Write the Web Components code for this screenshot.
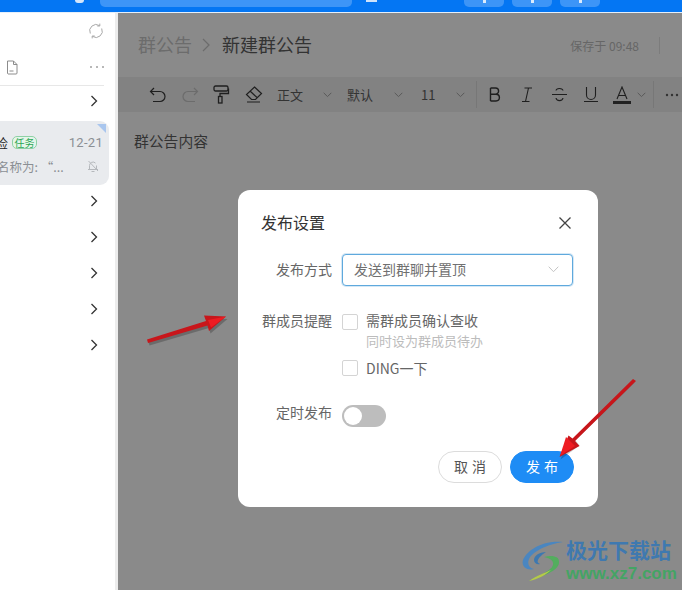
<!DOCTYPE html>
<html lang="zh">
<head>
<meta charset="utf-8">
<title>发布设置</title>
<style>
  html, body { margin: 0; height: 100%; }
  body { font-family: "Noto Sans CJK SC", "Noto Sans", sans-serif; overflow: hidden; }
</style>
</head>
<body>
<app-window>
  <top-bar slot="top"></top-bar>
  <chat-sidebar slot="side"></chat-sidebar>
  <doc-editor slot="main"></doc-editor>
  <publish-dialog slot="over"></publish-dialog>
  <note-marks slot="over"></note-marks>
  <site-mark slot="over"></site-mark>
</app-window>

<script>
// small helper, every element sets its own shadow html
class Base extends HTMLElement {
  constructor() {
    super();
    this.attachShadow({ mode: "open" });
  }
  connectedCallback() {
    this.shadowRoot.innerHTML = this.html();
  }
}

class AppWindow extends Base {
  html() {
    return `
      <style>
        :host { display: block; position: relative; width: 682px; height: 590px; overflow: hidden; background: #8a8a8a; }
        .shell { display: flex; flex-direction: column; height: 100%; }
        .row { flex: 1; display: flex; min-height: 0; }
      </style>
      <div class="shell">
        <slot name="top"></slot>
        <div class="row">
          <slot name="side"></slot>
          <slot name="main"></slot>
        </div>
      </div>
      <slot name="over"></slot>
    `;
  }
}

class TopBar extends Base {
  html() {
    return `
      <style>
        :host { display: block; flex: none; height: 12px; background: #0476f3; border-bottom: 1px solid #e6f0fb; }
        .bar { display: flex; height: 7px; }
        .dot { width: 9px; height: 3px; margin-left: 75px; background: #d5e6fa; border-radius: 0 0 5px 5px; }
        .search { width: 252px; margin-left: 16px; background: #3d95f7; border-radius: 0 0 5px 5px; }
        .frag { width: 11px; height: 2px; margin-left: 14px; background: #cfe3fb; }
        .btn { width: 40px; background: #3d95f7; border-radius: 0 0 5px 5px; margin-left: 8px; display: flex; justify-content: center; }
        .btn i { width: 3px; height: 3px; background: #dcebfc; }
        .first { margin-left: 87px; }
      </style>
      <div class="bar">
        <div class="dot"></div>
        <div class="search"></div>
        <div class="frag"></div>
        <div class="btn first"><i></i></div>
        <div class="btn"><i></i></div>
        <div class="btn"><i></i></div>
      </div>
    `;
  }
}

const chevron = `<svg width="8" height="12" viewBox="0 0 8 12" fill="none" stroke="#333" stroke-width="1.3"><path d="M1.500 1l5 5-5 5"/></svg>`;

class SideRow extends Base {
  html() {
    return `
      <style>
        :host { display: flex; height: 36px; align-items: center; justify-content: flex-end; padding-right: 17px; }
        svg { display: block; }
      </style>
      ${chevron}
    `;
  }
}

class ChatCard extends Base {
  html() {
    return `
      <style>
        :host { display: block; box-sizing: border-box; position: relative; width: 109px; height: 64px; margin: 2px 0 0; background: #e9ebee; border-radius: 0 9px 9px 0; color: #333; overflow: hidden; }
        .tri { position: absolute; right: 3px; top: 3px; width: 0; height: 0; border-top: 9px solid #a9c6ee; border-left: 9px solid transparent; }
        .line { display: flex; align-items: center; height: 22px; }
        .one { margin-top: 10px; font-size: 13px; }
        .name { color: #222; width: 8px; overflow: hidden; display: block; white-space: nowrap; direction: rtl; }
        .tag { margin-left: 4px; width: 25px; height: 13px; line-height: 11px; box-sizing: border-box; border: 1px solid #8ed1a5; background: #e6f5ea; border-radius: 5px; color: #2aa654; font-size: 10px; text-align: center; }
        .date { margin-left: auto; margin-right: 6px; color: #8b8f94; font-family: "Roboto", sans-serif; font-size: 13px; letter-spacing: .3px; }
        .two { margin-top: 2px; font-size: 12.500px; color: #8b8f94; justify-content: space-between; padding-right: 9px; }
        .two span { margin-left: -3px; }
        svg { display: block; }
      </style>
      <div class="tri"></div>
      <div class="line one"><span class="name">检</span><span class="tag">任务</span><span class="date">12-21</span></div>
      <div class="line two">
        <span>名称为: “...</span>
        <svg width="14" height="14" viewBox="0 0 14 14" fill="none" stroke="#b5b8bc" stroke-width="1"><path d="M3.500 10.500V6.500a3.500 3.500 0 0 1 6-2.400M10.500 6.500v4M2 10.500h10M5.500 12.500h3M2.500 2l9.500 10"/></svg>
      </div>
    `;
  }
}

class ChatSidebar extends Base {
  html() {
    return `
      <style>
        :host { display: block; flex: none; width: 115px; background: #fff; border-right: 3px solid #ececec; box-sizing: content-box; }
        .sync { display: flex; justify-content: flex-end; padding: 10px 11px 0 0; height: 29px; }
        .tools { display: flex; align-items: center; justify-content: space-between; height: 30px; padding: 0 11px 0 6px; }
        hr { margin: 3px 11px 0 0; border: 0; border-top: 1px solid #e7e7e7; }
        svg { display: block; }
      </style>
      <div class="sync">
        <svg width="16" height="16" viewBox="0 0 16 16" fill="none" stroke="#a8a8a8" stroke-width="1"><path d="M2.300 10.500A6.300 6.300 0 0 1 11.500 2.600M13.700 5.500a6.300 6.300 0 0 1-9.200 7.900M11.800 .6v2.400H9.300M4.200 15.400V13h2.500"/></svg>
      </div>
      <div class="tools">
        <svg width="12" height="15" viewBox="0 0 12 15" fill="none" stroke="#8c8c8c" stroke-width="1"><path d="M1.500 1h6l3.500 3.500V13a1 1 0 0 1-1 1h-8a1 1 0 0 1-.5-1V1zM7.500 1v3.500H11M3.500 11h4"/></svg>
        <svg width="14" height="2" viewBox="0 0 14 2" fill="#a0a0a0"><circle cx="1" cy="1" r="1"/><circle cx="7" cy="1" r="1"/><circle cx="13" cy="1" r="1"/></svg>
      </div>
      <hr>
      <side-row style="margin-top:-3px"></side-row>
      <chat-card></chat-card>
      <side-row style="margin-top:-2px"></side-row>
      <side-row></side-row>
      <side-row></side-row>
      <side-row></side-row>
      <side-row></side-row>
    `;
  }
}

class EditTool extends Base {
  html() {
    return `
      <style>
        :host { display: inline-flex; flex: none; align-items: center; justify-content: center; width: var(--w, 32px); height: 35px; }
        svg { display: block; }
      </style>
      <slot></slot>
    `;
  }
}

class FontPick extends Base {
  html() {
    return `
      <style>
        :host { display: flex; flex: none; align-items: center; justify-content: space-between; box-sizing: border-box; width: var(--w, 60px); height: 35px; font-size: 13px; color: #333; }
        svg { display: block; }
      </style>
      <span><slot></slot></span>
      <svg width="9" height="6" viewBox="0 0 9 6" fill="none" stroke="#5a5a5a" stroke-width="1"><path d="M.7.8l3.800 3.800L8.300.8"/></svg>
    `;
  }
}

class DocEditor extends Base {
  html() {
    return `
      <style>
        :host { display: block; flex: 1; min-width: 0; background: #8a8a8a; }
        .crumb { display: flex; align-items: center; height: 64px; padding-left: 20px; font-size: 18px; color: #333; }
        .crumb .dim { color: #6c6c6c; }
        .crumb span:not(.saved) { transform: translateY(-1px); }
        .crumb svg { margin: 0 11px 0 10px; }
        .saved { margin-left: auto; font-size: 12px; color: #666; display: flex; align-items: center; }
        .saved i { display: block; width: 1px; height: 17px; background: #7c7c7c; margin: 0 22px 0 20px; }
        .tools { display: flex; align-items: center; height: 35px; background: #828282; padding-left: 24px; }
        .sep { flex: none; width: 1px; height: 27px; background: #777; }
        .body { padding: 19px 16px; font-size: 14.800px; line-height: 20px; color: #333; }
        svg { display: block; }
      </style>
      <div class="crumb">
        <span class="dim">群公告</span>
        <svg width="9" height="14" viewBox="0 0 9 14" fill="none" stroke="#6c6c6c" stroke-width="1.200"><path d="M1 1l6 6-6 6"/></svg>
        <span>新建群公告</span>
        <span class="saved">保存于 09:48<i></i></span>
      </div>
      <div class="tools">
        <edit-tool style="--w:32px"><svg width="18" height="16" viewBox="0 0 18 16" fill="none" stroke="#1f1f1f" stroke-width="1.200"><path d="M5 1L1.500 4.500 5 8M1.500 4.500H11a5 5 0 0 1 0 10H4"/></svg></edit-tool>
        <edit-tool style="--w:32px"><svg width="18" height="16" viewBox="0 0 18 16" fill="none" stroke="#6c6c6c" stroke-width="1.200"><path d="M13 1l3.500 3.500L13 8M16.500 4.500H7a5 5 0 0 0 0 10h7"/></svg></edit-tool>
        <edit-tool style="--w:30px"><svg width="17" height="19" viewBox="0 0 17 19" fill="none" stroke="#1f1f1f" stroke-width="1.300"><rect x="1" y="1" width="14" height="5" rx="1.500"/><path d="M15.500 3.500v5H7v3"/><rect x="5.500" y="11.500" width="3.500" height="6.500"/></svg></edit-tool>
        <edit-tool style="--w:36px"><svg width="18" height="17" viewBox="0 0 18 17" fill="none" stroke="#1f1f1f" stroke-width="1.200"><path d="M9.500 1l7 6.500-6 6H6.500L1.500 8.500zM5 5l7 6.500M2 16h13"/></svg></edit-tool>
        <font-pick style="--w:55px;margin-left:5px">正文</font-pick>
        <font-pick style="--w:56px;margin-left:15px">默认</font-pick>
        <font-pick style="--w:44px;margin-left:18px">11</font-pick>
        <span class="sep" style="margin:0 2px 0 11px"></span>
        <edit-tool style="--w:32px"><svg width="13" height="15" viewBox="0 0 13 15" fill="none" stroke="#1f1f1f" stroke-width="1.400"><path d="M1.500 1v13M1.500 1h5a3 3 0 0 1 0 6.200h-5M6.500 7.200h.5a3.300 3.300 0 0 1 0 6.800H1.500"/></svg></edit-tool>
        <edit-tool style="--w:32px"><svg width="12" height="15" viewBox="0 0 12 15" fill="none" stroke="#1f1f1f" stroke-width="1.100"><path d="M3.500 1H11M1 14.500h7.500M7.500 1L4.500 14.500"/></svg></edit-tool>
        <edit-tool style="--w:32px"><svg width="15" height="15" viewBox="0 0 15 15" fill="none" stroke="#1f1f1f" stroke-width="1.100"><path d="M0 7.500h15M11 3.500C10.500 1 4.500 .5 4 3.500M4 11c.5 3.500 6.500 3.500 7 0"/></svg></edit-tool>
        <edit-tool style="--w:32px"><svg width="14" height="15" viewBox="0 0 14 15" fill="none" stroke="#1f1f1f" stroke-width="1.100"><path d="M2.500 0v8a4.500 4.500 0 0 0 9 0V0M0 14.500h14"/></svg></edit-tool>
        <edit-tool style="--w:30px"><svg width="18" height="18" viewBox="0 0 18 18" fill="none" stroke="#1f1f1f" stroke-width="1.100"><path d="M4 13L9 1l5 12M5.500 9.500h7"/><rect x="0" y="15" width="18" height="3" fill="#222" stroke="none"/></svg></edit-tool>
        <svg width="9" height="6" viewBox="0 0 9 6" fill="none" stroke="#5a5a5a" stroke-width="1"><path d="M.7.8l3.800 3.800L8.300.8"/></svg>
        <span class="sep" style="margin:0 11px 0 7px"></span>
        <svg width="14" height="4" viewBox="0 0 14 4" fill="#333"><circle cx="2" cy="2" r="1.200"/><circle cx="7" cy="2" r="1.200"/><circle cx="12" cy="2" r="1.200"/></svg>
      </div>
      <div class="body">群公告内容</div>
    `;
  }
}

class FormRow extends Base {
  html() {
    return `
      <style>
        :host { display: grid; grid-template-columns: 70px 1fr; column-gap: 10px; align-items: var(--align, center); }
        .label { text-align: right; font-size: 14px; color: #666; line-height: 20px; white-space: nowrap; margin-top: var(--label-top, -2px); }
      </style>
      <div class="label"><slot name="label"></slot></div>
      <div><slot></slot></div>
    `;
  }
}

class PickBox extends Base {
  html() {
    return `
      <style>
        :host { display: flex; align-items: center; justify-content: space-between; box-sizing: border-box; height: 32px; width: 231px; padding: 0 13px 3px 11px; border: 1px solid #5fa9dd; border-radius: 4px; box-shadow: 0 0 0 1px #d5e8f6; font-size: 14px; color: #707070; background: #fff; }
        svg { display: block; margin-top: 2px; }
      </style>
      <span><slot></slot></span>
      <svg width="11" height="7" viewBox="0 0 11 7" fill="none" stroke="#c4c4c4" stroke-width="1"><path d="M.7.7l4.800 5 4.800-5"/></svg>
    `;
  }
}

class CheckOption extends Base {
  html() {
    return `
      <style>
        :host { display: grid; grid-template-columns: 16px 1fr; column-gap: 8px; }
        .box { box-sizing: border-box; width: 16px; height: 16px; border: 1px solid #d4d4d4; border-radius: 2px; }
        .main { font-size: 14px; line-height: 16px; color: #666; transform: translateY(var(--shift, 0)); }
        .sub { font-size: 13px; line-height: 21px; color: #bcbcbc; }
      </style>
      <div class="box"></div>
      <div>
        <div class="main"><slot></slot></div>
        <div class="sub"><slot name="sub"></slot></div>
      </div>
    `;
  }
}

class ToggleSwitch extends Base {
  html() {
    return `
      <style>
        :host { display: block; box-sizing: border-box; width: 44px; height: 22px; padding: 2px; border-radius: 11px; background: #bdbdbd; }
        i { display: block; width: 18px; height: 18px; border-radius: 50%; background: #fff; }
      </style>
      <i></i>
    `;
  }
}

class PillButton extends Base {
  html() {
    return `
      <style>
        :host { display: flex; align-items: center; justify-content: center; box-sizing: border-box; width: 64px; height: 32px; padding-bottom: 3px; border-radius: 16px; border: 1px solid #dcdcdc; background: #fff; color: #555; font-size: 14px; letter-spacing: 4px; text-indent: 4px; }
        :host([primary]) { border-color: #1e8cf5; background: #1e8cf5; color: #fff; }
      </style>
      <slot></slot>
    `;
  }
}

class PublishDialog extends Base {
  html() {
    return `
      <style>
        :host { display: block; position: absolute; left: 238px; top: 190px; box-sizing: border-box; width: 360px; height: 317px; padding: 20px 25px 24px 24px; background: #fff; border-radius: 12px; }
        .head { display: flex; align-items: center; justify-content: space-between; height: 24px; font-size: 16px; color: #333; padding-right: 1px; }
        .head span { margin-left: -1px; }
        svg { display: block; margin-top: 1px; }
        .form { display: flex; flex-direction: column; margin-top: 20px; margin-right: -1px; }
        .members { margin-top: 28px; --align: start; --label-top: -4px; }
        .stack { display: flex; flex-direction: column; gap: 9px; }
        .timer { margin-top: 29px; --label-top: -8px; }
        .foot { display: flex; justify-content: flex-end; gap: 8px; margin-top: 24px; margin-right: -1px; }
      </style>
      <div class="head">
        <span>发布设置</span>
        <svg width="14" height="14" viewBox="0 0 14 14" fill="none" stroke="#444" stroke-width="1.300"><path d="M1.500 1.500l11 11M12.500 1.500l-11 11"/></svg>
      </div>
      <div class="form">
        <form-row>
          <span slot="label">发布方式</span>
          <pick-box>发送到群聊并置顶</pick-box>
        </form-row>
        <form-row class="members">
          <span slot="label">群成员提醒</span>
          <div class="stack">
            <check-option style="--shift:-2px">需群成员确认查收<span slot="sub">同时设为群成员待办</span></check-option>
            <check-option>DING一下</check-option>
          </div>
        </form-row>
        <form-row class="timer">
          <span slot="label">定时发布</span>
          <toggle-switch></toggle-switch>
        </form-row>
      </div>
      <div class="foot">
        <pill-button>取消</pill-button>
        <pill-button primary>发布</pill-button>
      </div>
    `;
  }
}

// the two red markers drawn on top of the screenshot
class NoteMarks extends Base {
  html() {
    return `
      <style>
        :host { display: block; position: absolute; inset: 0; pointer-events: none; }
        svg { display: block; }
      </style>
      <svg width="682" height="590" viewBox="0 0 682 590">
        <g fill="#000" opacity=".22" transform="translate(1.500 2.500)">
          <path d="M147 339.500L206 321l-2-5.500L226 316.500 209 331l-1.500-5.500L148 343z"/>
          <path d="M633 380L574 438l4 5-19 14 8-21 4 3L631 378z"/>
        </g>
        <g fill="#c8161b">
          <path d="M147 339.500L206 321l-2-5.500L226 316.500 209 331l-1.500-5.500L148 343z"/>
          <path d="M636 381L575 441l4.500 5-20 11 9-21.500 4 3L633 379z"/>
        </g>
        <path d="M208 320l18-3.500-15 11z" fill="#ee1c22"/>
        <path d="M566 437l-6 19 15-10z" fill="#ee1c22"/>
      </svg>
    `;
  }
}

class SiteMark extends Base {
  html() {
    return `
      <style>
        :host { display: flex; position: absolute; left: 522px; top: 537px; align-items: flex-start; gap: 1px; }
        svg { display: block; flex: none; margin-top: 3px; }
        .txt { display: flex; flex-direction: column; }
        .name { font-size: 21px; line-height: 24px; font-weight: 700; color: #3f79b0; white-space: nowrap; }
        .url { margin-top: 3px; font-family: "Liberation Sans", sans-serif; font-weight: 700; font-size: 17px; line-height: 20px; color: #44a464; white-space: nowrap; }
      </style>
      <svg width="43" height="42" viewBox="0 0 43 42" fill="none">
        <path d="M41 2C24 0 6 8 1 20c-2 7 4 11 11 9-5-1-7-5-5-10C11 11 26 4 41 2z" fill="#4a86c0"/>
        <path d="M24 12c-7 0-12 4-12 8 0 3 3 5 6 4-2-1-3-2-2-4 1-3 5-6 8-8z" fill="#3d78b0"/>
        <path d="M22 17c8-2 16-1 15 6-1 8-16 13-30 18 8-6 22-9 24-16 1-5-4-7-9-8z" fill="#53ad5e"/>
        <path d="M7 41c8-6 16-8 22-11-5 5-13 9-22 11z" fill="#b6c94a"/>
      </svg>
      <div class="txt">
        <span class="name">极光下载站</span>
        <span class="url">www.xz7.com</span>
      </div>
    `;
  }
}

customElements.define("app-window", AppWindow);
customElements.define("top-bar", TopBar);
customElements.define("side-row", SideRow);
customElements.define("chat-card", ChatCard);
customElements.define("chat-sidebar", ChatSidebar);
customElements.define("edit-tool", EditTool);
customElements.define("font-pick", FontPick);
customElements.define("doc-editor", DocEditor);
customElements.define("form-row", FormRow);
customElements.define("pick-box", PickBox);
customElements.define("check-option", CheckOption);
customElements.define("toggle-switch", ToggleSwitch);
customElements.define("pill-button", PillButton);
customElements.define("publish-dialog", PublishDialog);
customElements.define("note-marks", NoteMarks);
customElements.define("site-mark", SiteMark);
</script>
</body>
</html>
